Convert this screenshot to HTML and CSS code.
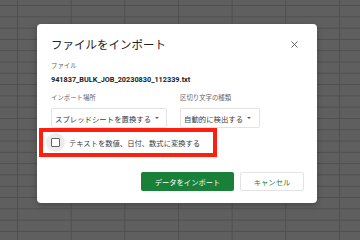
FILE: index.html
```html
<!DOCTYPE html>
<html lang="ja">
<head>
<meta charset="utf-8">
<link rel="stylesheet" href="styles.css">
</head>
<body>
<div class="dialog">
  <div class="header">
    <div class="title">ファイルをインポート</div>
    <svg class="close" width="7" height="7" viewBox="0 0 7 7"><path d="M0.5 0.5L6.5 6.5M6.5 0.5L0.5 6.5" stroke="#5f6368" stroke-width="1"/></svg>
  </div>
  <div class="label first">ファイル</div>
  <div class="filename">941837_BULK_JOB_20230830_112339.txt</div>
  <div class="options">
    <div class="col">
      <div class="label">インポート場所</div>
      <div class="select wide"><span>スプレッドシートを置換する</span><span class="arrow"></span></div>
    </div>
    <div class="col">
      <div class="label">区切り文字の種類</div>
      <div class="select"><span>自動的に検出する</span><span class="arrow"></span></div>
    </div>
  </div>
  <div class="highlight">
    <span class="check"><span class="box"></span></span>
    <span class="check-text">テキストを数値、日付、数式に変換する</span>
  </div>
  <div class="actions">
    <button class="btn primary">データをインポート</button>
    <button class="btn secondary">キャンセル</button>
  </div>
</div>
</body>
</html>
```
FILE: styles.css
```css
html, body {
  margin: 0;
  padding: 0;
  width: 360px;
  height: 232px;
  overflow: hidden;
}
body {
  font-family: "Noto Sans CJK JP", "Noto Sans", sans-serif;
  background-color: #5f5f5f;
  background-image:
    linear-gradient(to right, #4f4f4f 1px, transparent 1px),
    linear-gradient(to bottom, #4f4f4f 1px, transparent 1px);
  background-size: 53.67px 11.3px;
  background-position: 17px 5px;
  position: relative;
}
.dialog {
  position: absolute;
  left: 37px;
  top: 24px;
  width: 280px;
  height: 179px;
  box-sizing: border-box;
  background: #fff;
  border-radius: 4px;
  padding: 13px 13px 12px 14px;
  box-shadow: 0 2px 6px rgba(0,0,0,0.25);
  display: flex;
  flex-direction: column;
}
.header {
  display: flex;
  align-items: center;
  justify-content: space-between;
  height: 14px;
}
.title {
  font-size: 11.5px;
  line-height: 14px;
  color: #202124;
}
.close {
  margin-right: 6px;
}
.label {
  font-size: 6.4px;
  line-height: 8px;
  color: #5f6368;
  white-space: nowrap;
}
.label.first {
  margin-top: 11px;
}
.filename {
  margin-top: 5px;
  font-family: "Roboto", "Liberation Sans", sans-serif;
  font-weight: 700;
  font-size: 7.3px;
  line-height: 9px;
  color: #202124;
}
.options {
  margin-top: 10px;
  display: grid;
  grid-template-columns: 129px auto;
}
.col {
  display: flex;
  flex-direction: column;
  align-items: flex-start;
}
.select {
  margin-top: 6px;
  height: 20px;
  box-sizing: border-box;
  border: 1px solid #e3e3e3;
  border-radius: 2px;
  display: flex;
  align-items: center;
  padding: 0 7px 0 3px;
  gap: 4px;
  font-size: 7.4px;
  color: #3c4043;
  white-space: nowrap;
  width: 80px;
}
.select.wide {
  width: 116px;
}
.arrow {
  width: 0;
  height: 0;
  flex-shrink: 0;
  border-left: 2px solid transparent;
  border-right: 2px solid transparent;
  border-top: 2.5px solid #5f6368;
}
.highlight {
  margin: 0 0 0 -12px;
  width: 178px;
  height: 29px;
  box-sizing: border-box;
  border: 4.5px solid #ff1f0f;
  display: flex;
  align-items: center;
  padding-left: 3px;
}
.check {
  width: 19px;
  height: 19px;
  border-radius: 50%;
  background: #ececec;
  display: flex;
  align-items: center;
  justify-content: center;
  flex-shrink: 0;
}
.box {
  width: 9px;
  height: 9px;
  box-sizing: border-box;
  border: 1.4px solid #5f6368;
  border-radius: 1px;
  background: #fff;
}
.check-text {
  margin-left: 4px;
  font-size: 7.3px;
  color: #3c4043;
  white-space: nowrap;
}
.actions {
  margin-top: auto;
  display: flex;
  justify-content: flex-end;
  gap: 6px;
}
.btn {
  height: 19px;
  border-radius: 2px;
  font-family: "Noto Sans CJK JP", "Noto Sans", sans-serif;
  font-size: 7.3px;
  padding: 0;
  display: flex;
  align-items: center;
  justify-content: center;
  box-sizing: border-box;
}
.primary {
  width: 93px;
  background: #188038;
  color: #fff;
  border: none;
}
.secondary {
  width: 64px;
  background: #fff;
  color: #188038;
  border: 1px solid #e3e3e3;
}
```
